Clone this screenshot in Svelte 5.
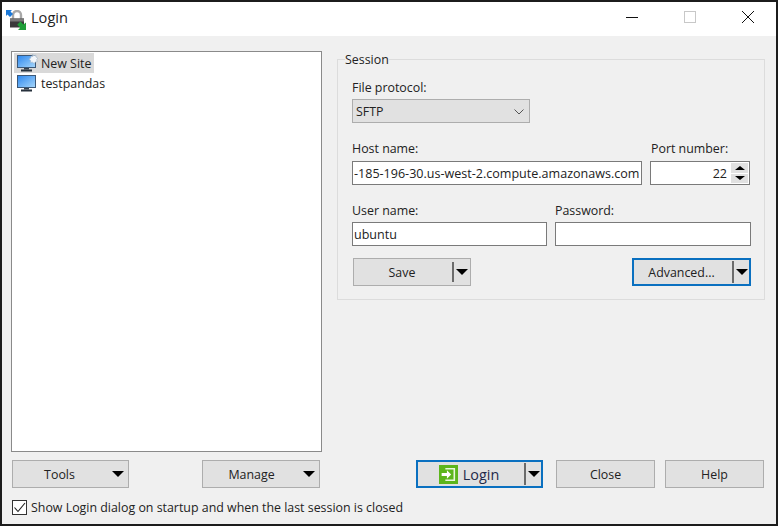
<script>
  let hostName = $state('-185-196-30.us-west-2.compute.amazonaws.com');
  let portNumber = $state(22);
  let userName = $state('ubuntu');
  let password = $state('');
  let showOnStartup = $state(true);
  const sites = [
    { name: 'New Site', isNew: true },
    { name: 'testpandas', isNew: false }
  ];
</script>

{#snippet monitor(isNew)}
  <svg class="site-icon" width="22" height="18" viewBox="0 0 22 18">
    <defs>
      <linearGradient id="screen" x1="0" y1="0" x2="1" y2="1">
        <stop offset="0" stop-color="#2b86ee" />
        <stop offset="1" stop-color="#a8d8fb" />
      </linearGradient>
    </defs>
    <rect x="0.5" y="1.5" width="18" height="12" fill="url(#screen)" stroke="#3c5878" />
    <rect x="7" y="14" width="5" height="1.5" fill="#33414f" />
    <rect x="4" y="15.5" width="11" height="2" fill="#26313c" />
    {#if isNew}
      <path d="M15.5 0l1.3 1.7 2-.6.2 2 1.9 1-1.3 1.6.8 2-2.1.2-1.1 1.7-1.6-1.4-2 .3.1-2-1.6-1.3 1.7-1.1.2-2 1.8.5z" fill="#f2f6fa" stroke="#a3b5c8" stroke-width="0.6" />
    {/if}
  </svg>
{/snippet}

<div class="window">
  <header class="titlebar">
    <svg class="app-icon" width="20" height="20" viewBox="0 0 20 20">
      <path d="M7 9V5a4 4 0 0 1 8 0v4" fill="none" stroke="#a8a8a8" stroke-width="2.4" />
      <rect x="4" y="8.5" width="14" height="9" fill="#3a3a3a" />
      <rect x="4" y="8.5" width="14" height="3" fill="#787878" />
      <path d="M0 0h6L4.5 1.5 7 4 4 7 1.5 4.5 0 6z" fill="#1a78d8" />
      <path d="M20 20h-8l2.2-2.2-3-3 3.2-3.2 3 3L20 12.5z" fill="#1f9e38" />
    </svg>
    <span class="title">Login</span>
    <div class="window-controls">
      <svg width="14" height="14" viewBox="0 0 14 14"><path d="M1 7.5h12" stroke="#111" /></svg>
      <svg width="14" height="14" viewBox="0 0 14 14"><rect x="1.5" y="1.5" width="11" height="11" fill="none" stroke="#c8c8c8" /></svg>
      <svg width="14" height="14" viewBox="0 0 14 14"><path d="M1 1l12 12M13 1L1 13" stroke="#111" /></svg>
    </div>
  </header>

  <div class="body">
    <div class="main">
      <div class="left">
        <ul class="tree">
          {#each sites as site}
            <li>
              <div class="site" class:selected={site.isNew}>
                {@render monitor(site.isNew)}
                <span>{site.name}</span>
              </div>
            </li>
          {/each}
        </ul>
        <div class="left-buttons">
          <button class="btn tools"><span>Tools</span><i class="arrow"></i></button>
          <button class="btn manage"><span>Manage</span><i class="arrow"></i></button>
        </div>
      </div>

      <div class="right">
        <fieldset class="session">
          <legend>Session</legend>
          <label class="field protocol">
            <span>File protocol:</span>
            <div class="select">
              SFTP
              <svg width="10" height="6" viewBox="0 0 10 6"><path d="M0.5 0.5L5 5l4.5-4.5" fill="none" stroke="#555" /></svg>
            </div>
          </label>

          <div class="row host-row">
            <label class="field host">
              <span>Host name:</span>
              <input bind:value={hostName} />
            </label>
            <label class="field port">
              <span>Port number:</span>
              <div class="spin">
                <input class="port-input" bind:value={portNumber} />
                <div class="spin-buttons">
                  <b><i class="up"></i></b>
                  <b><i class="down"></i></b>
                </div>
              </div>
            </label>
          </div>

          <div class="row user-row">
            <label class="field user">
              <span>User name:</span>
              <input bind:value={userName} />
            </label>
            <label class="field pass">
              <span>Password:</span>
              <input type="password" bind:value={password} />
            </label>
          </div>

          <div class="row action-row">
            <button class="btn split save">
              <span>Save</span><em></em><i class="arrow"></i>
            </button>
            <button class="btn split advanced focused">
              <span>Advanced...</span><em></em><i class="arrow"></i>
            </button>
          </div>
        </fieldset>

        <div class="right-buttons">
          <button class="btn split login focused">
            <span class="login-label">
              <svg width="19" height="19" viewBox="0 0 18 18">
                <rect width="18" height="18" fill="#5cb51c" />
                <path d="M6 3.5h8.5v11H6" fill="none" stroke="#eaf7dd" stroke-width="1.5" />
                <path d="M2.5 7.5h5V5l4 4-4 4v-2.5h-5z" fill="#fff" />
              </svg>
              Login
            </span><em></em><i class="arrow"></i>
          </button>
          <button class="btn close">Close</button>
          <button class="btn help">Help</button>
        </div>
      </div>
    </div>

    <label class="startup">
      <span class="check" class:on={showOnStartup}>
        <svg width="13" height="11" viewBox="0 0 13 11"><path d="M1.5 5.5L5 9.5 12 1" fill="none" stroke="#222" stroke-width="1.1" /></svg>
      </span>
      Show Login dialog on startup and when the last session is closed
    </label>
  </div>
</div>

<style>
  :global(body) {
    background: #fff;
    font-family: "Open Sans", "Noto Sans", sans-serif;
    font-size: 12.4px;
    line-height: 17px;
    color: #222;
  }

  .window {
    box-sizing: border-box;
    width: 778px;
    height: 526px;
    border: 2px solid #1c1c1c;
    display: flex;
    flex-direction: column;
    background: #f0f0f0;
  }

  .titlebar {
    height: 34px;
    background: #fff;
    display: flex;
    align-items: center;
    padding-left: 4px;
    flex: none;
  }

  .app-icon {
    margin-top: 1px;
  }

  .title {
    margin-left: 5px;
    font-size: 14.6px;
    margin-bottom: 4px;
  }

  .window-controls {
    margin-left: auto;
    display: flex;
    gap: 44px;
    margin-right: 21px;
    margin-bottom: 4px;
  }

  .body {
    flex: 1;
    display: flex;
    flex-direction: column;
    padding: 15px 11px 0 9px;
  }

  .main {
    display: flex;
    gap: 15px;
  }

  .left {
    width: 311px;
    flex: none;
  }

  .tree {
    box-sizing: border-box;
    height: 401px;
    margin: 0;
    padding: 1px 2px;
    list-style: none;
    background: #fff;
    border: 1px solid #8a8a8a;
  }

  .tree li {
    height: 20px;
  }

  .site {
    display: inline-flex;
    align-items: center;
    height: 20px;
    gap: 2px;
    padding: 0 3px;
  }

  .site-icon {
    flex: none;
  }

  .site.selected {
    background: #d9d9d9;
  }

  .left-buttons {
    display: flex;
    justify-content: space-between;
    margin: 8px 2px 0 1px;
  }

  .btn {
    box-sizing: border-box;
    height: 28px;
    background: #e1e1e1;
    border: 1px solid #adadad;
    padding: 0;
    font: inherit;
    color: #222;
    display: flex;
    align-items: center;
    justify-content: center;
    position: relative;
  }

  .arrow {
    width: 0;
    height: 0;
    border-left: 6px solid transparent;
    border-right: 6px solid transparent;
    border-top: 6px solid #000;
  }

  .tools {
    width: 117px;
    padding-right: 22px;
  }

  .manage {
    width: 118px;
    padding-right: 19px;
  }

  .tools .arrow,
  .manage .arrow {
    position: absolute;
    right: 4px;
    top: 10px;
  }

  .right {
    flex: 1;
    display: flex;
    flex-direction: column;
  }

  .session {
    box-sizing: border-box;
    height: 241px;
    margin: 8px 0 0;
    padding: 0 13px 0 14px;
    border: 1px solid #dcdcdc;
    min-width: 0;
    position: relative;
  }

  legend {
    padding: 0;
    margin-left: -7px;
    line-height: 1px;
    height: 1px;
  }

  .field {
    display: flex;
    flex-direction: column;
    gap: 3px;
  }

  .protocol {
    margin-top: 19px;
  }

  .select {
    box-sizing: border-box;
    width: 178px;
    height: 24px;
    border: 1px solid #adadad;
    background: #e1e1e1;
    display: flex;
    align-items: center;
    justify-content: space-between;
    padding: 1px 5px 0 3px;
  }

  .row {
    display: flex;
  }

  input {
    box-sizing: border-box;
    height: 24px;
    width: 100%;
    border: 1px solid #7a7a7a;
    background: #fff;
    padding: 0 1px;
    font: inherit;
    font-size: 12.55px;
    color: #222;
    outline: none;
  }

  .host-row {
    margin-top: 17px;
    gap: 8px;
  }

  .host-row .field {
    gap: 4px;
  }

  .host {
    width: 290px;
  }

  .port {
    width: 100px;
  }

  .port span {
    padding-left: 1px;
  }

  .spin {
    position: relative;
  }

  .port-input {
    text-align: right;
    padding-right: 22px;
  }

  .spin-buttons {
    position: absolute;
    right: 2px;
    top: 2px;
    bottom: 2px;
    width: 17px;
    display: flex;
    flex-direction: column;
    gap: 1px;
  }

  .spin-buttons b {
    flex: 1;
    background: #e1e1e1;
    display: flex;
    align-items: center;
    justify-content: center;
  }

  .spin-buttons i {
    width: 0;
    height: 0;
    border-left: 5px solid transparent;
    border-right: 5px solid transparent;
  }

  .up {
    border-bottom: 4px solid #000;
  }

  .down {
    border-top: 4px solid #000;
  }

  .user-row {
    margin-top: 17px;
    gap: 8px;
  }

  .user {
    width: 195px;
  }

  .pass {
    width: 196px;
  }

  .action-row {
    margin-top: 12px;
    margin-left: 1px;
    justify-content: space-between;
  }

  .split em {
    position: absolute;
    top: 3px;
    bottom: 3px;
    right: 16px;
    width: 2px;
    background: #6b6b6b;
  }

  .split .arrow {
    position: absolute;
    right: 2px;
    top: 10px;
  }

  .save {
    width: 118px;
    padding-right: 20px;
  }

  .advanced {
    width: 119px;
    padding-right: 20px;
  }

  .focused {
    border: 2px solid #0a70c0;
  }

  .focused em {
    right: 15px;
    top: 1px;
    bottom: 1px;
  }

  .focused .arrow {
    right: 1px;
    top: 9px;
  }

  .right-buttons {
    display: flex;
    margin-top: 160px;
    margin-left: 79px;
  }

  .login {
    width: 127px;
    padding-right: 21px;
    margin-right: 13px;
  }

  .login-label {
    display: flex;
    align-items: center;
    gap: 5px;
    font-size: 14.4px;
    color: #1f2a4a;
  }

  .close {
    width: 99px;
    margin-right: 10px;
  }

  .help {
    width: 99px;
  }

  .startup {
    display: flex;
    align-items: center;
    gap: 4px;
    margin-top: 11px;
    margin-left: 1px;
  }

  .check {
    box-sizing: border-box;
    width: 15px;
    height: 15px;
    border: 1px solid #333;
    background: #fff;
    display: flex;
    align-items: center;
    justify-content: center;
  }
</style>
